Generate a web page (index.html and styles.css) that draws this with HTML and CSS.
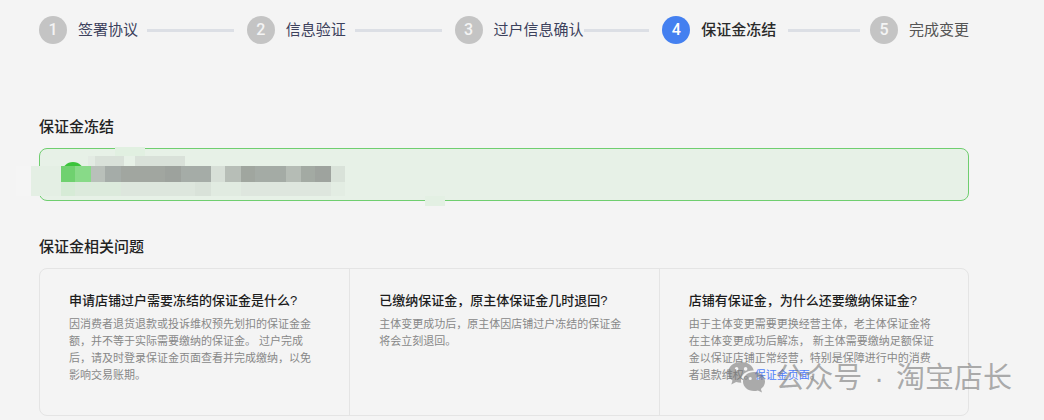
FILE: index.html
```
<!DOCTYPE html>
<html lang="zh-CN">
<head>
    <meta charset="UTF-8">
    <title>保证金冻结</title>
    <link rel="stylesheet" href="styles.css">
</head>
<body>

<div class="container">
    <ol class="steps">
        <li class="step"><span class="num">1</span><span class="label">签署协议</span></li>
        <li class="step"><span class="num">2</span><span class="label">信息验证</span></li>
        <li class="step long"><span class="num">3</span><span class="label">过户信息确认</span></li>
        <li class="step active"><span class="num">4</span><span class="label">保证金冻结</span></li>
        <li class="step last"><span class="num">5</span><span class="label">完成变更</span></li>
    </ol>

    <h2>保证金冻结</h2>
    <div class="notice">
        <!-- masked account text -->
        <svg class="mask" width="435" height="62" viewBox="15 145 435 62" shape-rendering="crispEdges" aria-hidden="true">
            <rect x="115" y="147" width="30" height="9" fill="#e1f0e1"/>
            <rect x="88" y="156" width="7" height="10" fill="#e3ebe3"/>
            <rect x="95" y="156" width="29" height="10" fill="#d9e1d9"/>
            <rect x="135" y="156" width="50" height="10" fill="#d9e1d9"/>
            <circle cx="73" cy="173" r="11" fill="#3bc43b" shape-rendering="auto"/>
            <rect x="16" y="166" width="15" height="30" fill="#f5f5f5"/>
            <rect x="31" y="166" width="30" height="30" fill="#e4efe4"/>
            <rect x="61" y="166" width="14" height="16" fill="#6fd16f"/>
            <rect x="75" y="166" width="16" height="16" fill="#88da88"/>
            <rect x="91" y="166" width="14" height="16" fill="#b9c0ba"/>
            <rect x="105" y="166" width="16" height="16" fill="#a5aca8"/>
            <rect x="121" y="166" width="44" height="16" fill="#a1a6a0"/>
            <rect x="165" y="166" width="16" height="16" fill="#9da29d"/>
            <rect x="181" y="166" width="30" height="16" fill="#a5aca7"/>
            <rect x="211" y="166" width="14" height="16" fill="#d7dfd7"/>
            <rect x="225" y="166" width="16" height="16" fill="#b7beb7"/>
            <rect x="241" y="166" width="14" height="16" fill="#a0a69f"/>
            <rect x="255" y="166" width="31" height="16" fill="#a4aba5"/>
            <rect x="286" y="166" width="15" height="16" fill="#b5bcb5"/>
            <rect x="301" y="166" width="14" height="16" fill="#a3aaa3"/>
            <rect x="315" y="166" width="16" height="16" fill="#9ea39e"/>
            <rect x="331" y="166" width="14" height="16" fill="#d9e2d9"/>
            <rect x="61" y="182" width="14" height="14" fill="#d6ebd6"/>
            <rect x="75" y="182" width="46" height="14" fill="#dceadc"/>
            <rect x="121" y="182" width="74" height="14" fill="#dde6dd"/>
            <rect x="195" y="182" width="16" height="14" fill="#d9e2d9"/>
            <rect x="211" y="182" width="30" height="14" fill="#e1ebe1"/>
            <rect x="241" y="182" width="90" height="14" fill="#dee6de"/>
            <rect x="331" y="182" width="14" height="14" fill="#e3ede3"/>
            <rect x="425" y="196" width="20" height="10" fill="#e3f0e3"/>
        </svg>
    </div>

    <h2>保证金相关问题</h2>
    <div class="questions">
        <div class="question">
            <h3>申请店铺过户需要冻结的保证金是什么?</h3>
            <p>因消费者退货退款或投诉维权预先划扣的保证金金额，并不等于实际需要缴纳的保证金。 过户完成后，请及时登录保证金页面查看并完成缴纳，以免影响交易账期。</p>
        </div>
        <div class="question">
            <h3>已缴纳保证金，原主体保证金几时退回?</h3>
            <p>主体变更成功后，原主体因店铺过户冻结的保证金将会立刻退回。</p>
        </div>
        <div class="question">
            <h3>店铺有保证金，为什么还要缴纳保证金?</h3>
            <p>由于主体变更需要更换经营主体，老主体保证金将在主体变更成功后解冻， 新主体需要缴纳足额保证金以保证店铺正常经营，特别是保障进行中的消费者退款维权。<a href="#">保证金页面</a>。</p>
        </div>
    </div>

    <div class="watermark">
        <svg width="40" height="34" viewBox="0 0 40 34" aria-hidden="true">
            <path fill="currentColor" fill-rule="evenodd" d="M14 1C6.500 1 1 5.700 1 11.500c0 3.300 1.700 6.100 4.500 8L4.300 23.500l4.800-2.400c1.600.5 3.200.7 5.200.7-.2-.8-.3-1.500-.3-2.300 0-5.600 5.400-9.900 11.800-9.900h1C25.700 4.400 20.400 1 14 1zM9.600 6.100a1.800 1.800 0 1 1 0 3.600 1.800 1.800 0 0 1 0-3.600zm9 0a1.800 1.800 0 1 1 0 3.600 1.800 1.800 0 0 1 0-3.600z"/>
            <path fill="currentColor" fill-rule="evenodd" d="M27 11c-6.300 0-11 4.200-11 9.500S20.700 30 27 30c1.400 0 2.700-.2 3.900-.6l4.100 2.200-1.100-3.600c2.600-1.900 4.100-4.500 4.100-7.500C38 15.200 33.300 11 27 11zm-3.700 5.100a1.500 1.500 0 1 1 0 3 1.500 1.500 0 0 1 0-3zm7.500 0a1.500 1.500 0 1 1 0 3 1.500 1.500 0 0 1 0-3z"/>
        </svg>
        <div class="account"><span>公众号</span><span>·</span><span>淘宝店长</span></div>
    </div>
</div>

</body>
</html>
```
FILE: styles.css
```
* {
    box-sizing: border-box;
}

body {
    margin: 0;
    font-family: "Liberation Sans", "Noto Sans CJK SC", sans-serif;
    background: #f4f4f4;
    color: #333;
}

.container {
    position: relative;
    padding: 16px 75px 4px 39px;
}

.steps {
    display: flex;
    list-style: none;
    margin: 0 0 71px;
    padding: 0;
}

.step {
    display: flex;
    flex: 1;
    align-items: center;
    font-size: 15px;
    line-height: 28px;
    color: #3c415c;
    white-space: nowrap;
}

.step::after {
    content: "";
    flex: 1;
    height: 3px;
    margin: 0 13px 0 9px;
    background: #dcdfe5;
}

.num {
    width: 28px;
    height: 28px;
    margin-right: 11px;
    border-radius: 50%;
    background: #c4c4c4;
    color: #f4f4f4;
    font-family: Roboto, sans-serif;
    font-size: 16px;
    font-weight: 500;
    text-align: center;
}

.step.long::after {
    margin-left: 0;
}

.step.active {
    color: #2a2a2a;
    font-weight: 500;
}

.step.active .num {
    background: #4480f0;
    color: #fff;
}

.step.active::after {
    margin: 0 10px 0 12px;
}

.step.last {
    flex: none;
    color: #555;
}

.step.last::after {
    display: none;
}

h2 {
    margin: 0 0 9px;
    font-size: 15px;
    font-weight: 500;
    line-height: 24px;
    color: #222;
}

.notice {
    position: relative;
    height: 53px;
    margin-bottom: 34px;
    border: 1px solid #6fce6f;
    border-radius: 8px;
    background: #e7f1e7;
}

.mask {
    position: absolute;
    left: -25px;
    top: -4px;
}

.questions {
    display: grid;
    grid-template-columns: repeat(3, 1fr);
    border: 1px solid #e4e4e4;
    border-radius: 8px;
}

.question {
    min-height: 146px;
    padding: 22px 29px;
}

.question + .question {
    border-left: 1px solid #e4e4e4;
}

h3 {
    margin: 0 0 5px;
    font-size: 13px;
    font-weight: 500;
    line-height: 20px;
    color: #1c1c1c;
}

p {
    margin: 0;
    font-size: 11px;
    line-height: 17px;
    color: #888;
}

a {
    color: #4f7dfa;
    text-decoration: none;
}

.watermark {
    position: absolute;
    right: 32px;
    bottom: 20px;
    display: flex;
    align-items: center;
    gap: 8px;
    font-size: 29px;
    line-height: 44px;
    color: rgba(120, 120, 120, 0.6);
    white-space: nowrap;
}

.account {
    display: flex;
    gap: 12px;
}
```
